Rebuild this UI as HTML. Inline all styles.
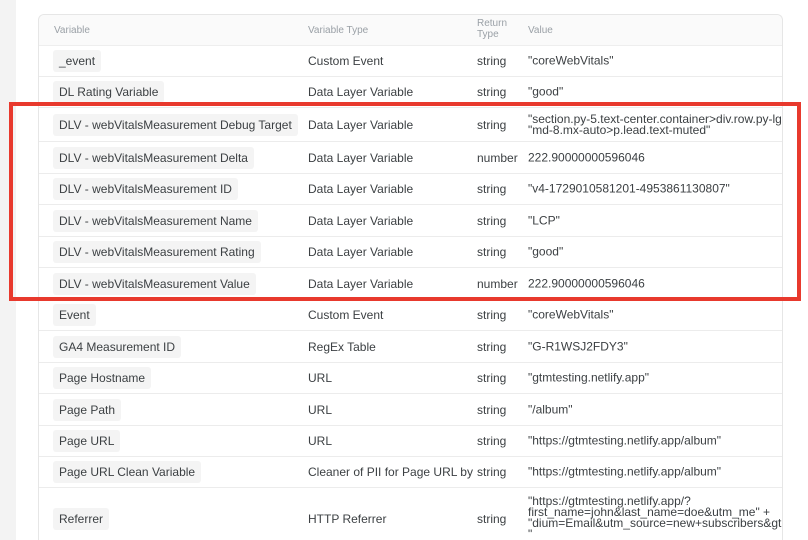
<!DOCTYPE html>
<html><head><style>
*{margin:0;padding:0;box-sizing:border-box}
html,body{width:808px;height:540px;overflow:hidden}
body{background:#fff;font-family:"Liberation Sans",Arial,sans-serif;color:#3c4043;font-size:12px;position:relative}
.strip{position:absolute;left:0;top:0;width:16px;height:540px;background:#f3f3f3}
.card{position:absolute;left:38px;top:14px;width:745px;height:526px;border:1px solid #e6e6e6;border-bottom:none;border-radius:6px 6px 0 0;background:#fff;overflow:hidden}
.hdr{position:absolute;top:0;left:0;right:0;height:31px;background:#fafafa;border-bottom:1px solid #eee;border-radius:6px 6px 0 0}
.h{position:absolute;font-size:10px;color:#9aa0a6}
.row{position:absolute;left:0;right:0;border-bottom:1px solid #ececec}
.c{position:absolute;top:50%;transform:translateY(-50%);white-space:nowrap}
.chip{left:14px;background:#f4f4f4;border-radius:3px;padding:4px 6px}
.t{left:269px}.r{left:438px}.v{left:489px;line-height:11px}
.red{position:absolute;left:9px;top:102px;width:792px;height:199px;border:4px solid #e8392d}
</style></head><body>
<div class="strip"></div>
<div class="card">
<div class="hdr">
<div class="h" style="left:15px;top:10px">Variable</div>
<div class="h" style="left:269px;top:10px">Variable Type</div>
<div class="h" style="left:438px;top:3px;line-height:11px">Return<br>Type</div>
<div class="h" style="left:489px;top:10px">Value</div>
</div>
<div class="row" style="top:31px;height:31px"><div class="c chip">_event</div><div class="c t">Custom Event</div><div class="c r">string</div><div class="c v">"coreWebVitals"</div></div>
<div class="row" style="top:62px;height:31px"><div class="c chip">DL Rating Variable</div><div class="c t">Data Layer Variable</div><div class="c r">string</div><div class="c v">"good"</div></div>
<div class="row" style="top:93px;height:34px"><div class="c chip">DLV - webVitalsMeasurement Debug Target</div><div class="c t">Data Layer Variable</div><div class="c r">string</div><div class="c v" style="overflow:hidden;width:254px">"section.py-5.text-center.container&gt;div.row.py-lg<br>"md-8.mx-auto&gt;p.lead.text-muted"</div></div>
<div class="row" style="top:127px;height:32px"><div class="c chip">DLV - webVitalsMeasurement Delta</div><div class="c t">Data Layer Variable</div><div class="c r">number</div><div class="c v">222.90000000596046</div></div>
<div class="row" style="top:159px;height:31px"><div class="c chip">DLV - webVitalsMeasurement ID</div><div class="c t">Data Layer Variable</div><div class="c r">string</div><div class="c v">"v4-1729010581201-4953861130807"</div></div>
<div class="row" style="top:190px;height:32px"><div class="c chip">DLV - webVitalsMeasurement Name</div><div class="c t">Data Layer Variable</div><div class="c r">string</div><div class="c v">"LCP"</div></div>
<div class="row" style="top:222px;height:31px"><div class="c chip">DLV - webVitalsMeasurement Rating</div><div class="c t">Data Layer Variable</div><div class="c r">string</div><div class="c v">"good"</div></div>
<div class="row" style="top:253px;height:32px"><div class="c chip">DLV - webVitalsMeasurement Value</div><div class="c t">Data Layer Variable</div><div class="c r">number</div><div class="c v">222.90000000596046</div></div>
<div class="row" style="top:285px;height:31px"><div class="c chip">Event</div><div class="c t">Custom Event</div><div class="c r">string</div><div class="c v">"coreWebVitals"</div></div>
<div class="row" style="top:316px;height:32px"><div class="c chip">GA4 Measurement ID</div><div class="c t">RegEx Table</div><div class="c r">string</div><div class="c v">"G-R1WSJ2FDY3"</div></div>
<div class="row" style="top:348px;height:31px"><div class="c chip">Page Hostname</div><div class="c t">URL</div><div class="c r">string</div><div class="c v">"gtmtesting.netlify.app"</div></div>
<div class="row" style="top:379px;height:32px"><div class="c chip">Page Path</div><div class="c t">URL</div><div class="c r">string</div><div class="c v">"/album"</div></div>
<div class="row" style="top:411px;height:31px"><div class="c chip">Page URL</div><div class="c t">URL</div><div class="c r">string</div><div class="c v">"https://gtmtesting.netlify.app/album"</div></div>
<div class="row" style="top:442px;height:31px"><div class="c chip">Page URL Clean Variable</div><div class="c t">Cleaner of PII for Page URL by</div><div class="c r">string</div><div class="c v">"https://gtmtesting.netlify.app/album"</div></div>
<div class="row" style="top:473px;height:53px;border-bottom:none"><div class="c chip" style="top:31px">Referrer</div><div class="c t" style="top:31px">HTTP Referrer</div><div class="c r" style="top:31px">string</div><div class="c v" style="top:8px;transform:none;overflow:hidden;width:254px;line-height:11px">"https://gtmtesting.netlify.app/?<br>first_name=john&amp;last_name=doe&amp;utm_me" +<br>"dium=Email&amp;utm_source=new+subscribers&amp;gt<br>"</div></div>
</div>
<div class="red"></div>
</body></html>
